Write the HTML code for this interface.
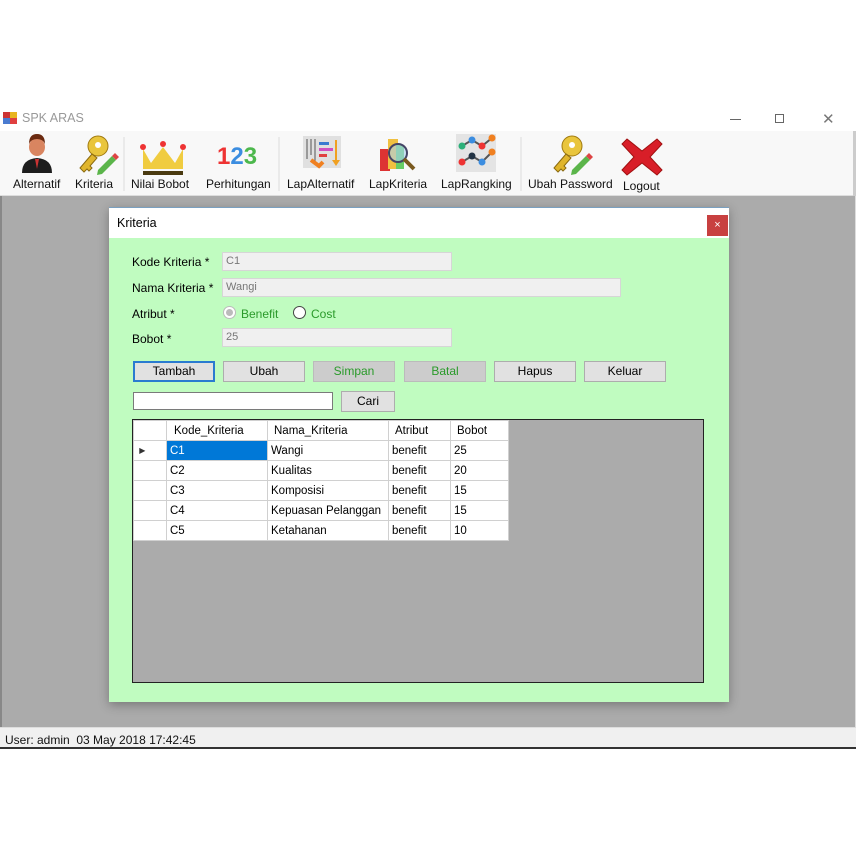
<!DOCTYPE html>
<html><head><style>
*{margin:0;padding:0;box-sizing:border-box}
body{width:856px;height:856px;background:#fff;position:relative;font-family:"Liberation Sans",sans-serif;font-size:12px;color:#000;overflow:hidden}
.a{position:absolute}
.tb{font-size:12px;color:#111;white-space:nowrap}
.lbl{font-size:12px}
.inp{background:#f0f0f0;border:1px solid #d6d6d6;color:#777;font-size:11px;padding:2px 3px;height:19px}
.btn{background:#e1e1e1;border:1px solid #adadad;text-align:center;font-size:12px;line-height:19px;height:21px}
table{border-collapse:collapse;font-size:11.5px}
td{border:1px solid #d0d0d0;height:20px;padding:0 3px;background:#fff}
</style></head><body>
<div class="a" style="left:3px;top:112px;width:14px;height:12px">
<div class="a" style="left:0;top:0;width:7px;height:6px;background:#c33"></div><div class="a" style="left:7px;top:0;width:7px;height:6px;background:#e8b520"></div><div class="a" style="left:0;top:6px;width:7px;height:6px;background:#4a7bd0"></div><div class="a" style="left:7px;top:6px;width:7px;height:6px;background:#e04040"></div></div>
<div class="a" style="left:22px;top:111px;font-size:12.5px;color:#999">SPK ARAS</div>
<div class="a" style="left:730px;top:119px;width:11px;height:1px;background:#666"></div>
<div class="a" style="left:775px;top:114px;width:9px;height:9px;border:1px solid #666"></div>
<div class="a" style="left:822px;top:110px;font-size:15px;color:#777">✕</div>
<div class="a" style="left:0;top:131px;width:856px;height:65px;background:#f8f8f8;border-bottom:1px solid #ddd"></div>
<div class="a" style="left:853px;top:131px;width:3px;height:65px;background:#ccc"></div>
<svg class="a" style="left:0;top:131px" width="856" height="65">
<ellipse cx="37" cy="16" rx="8" ry="9" fill="#d98560"/><path d="M29 13q0-10 8-10q8 0 8 10q-2-5-8-5q-6 0-8 5z" fill="#6b2a10"/><path d="M22 42q0-14 15-15q15 1 15 15z" fill="#1d1d1d"/><path d="M35 28h4l-2 10z" fill="#c33"/>
<g transform="translate(78,3)"><circle cx="20" cy="12" r="10" fill="#e9c53c" stroke="#a07a10"/><circle cx="20" cy="11" r="3" fill="#fff"/><path d="M14 20L2 34l4 4 3-3 2 2 3-3-2-2 7-8z" fill="#e0b52c" stroke="#8a6a10"/><path d="M20 36l14-14 4 4-14 14-5 1z" fill="#5bb54a"/><path d="M34 22l3-3 4 4-3 3z" fill="#d44"/></g>
<line x1="124" y1="6" x2="124" y2="60" stroke="#ddd"/>
<g transform="translate(143,10)"><path d="M0 8l8 14 12-16 12 16 8-14v20h-40z" fill="#f0cc40"/><rect x="0" y="30" width="40" height="4" fill="#4a3a10"/><circle cx="0" cy="6" r="3" fill="#e33"/><circle cx="20" cy="3" r="3" fill="#e33"/><circle cx="40" cy="6" r="3" fill="#e33"/></g>
<text x="217" y="33" font-family="Liberation Sans" font-size="24" font-weight="bold"><tspan fill="#e33">1</tspan><tspan fill="#3b8de0">2</tspan><tspan fill="#4db84d">3</tspan></text>
<line x1="279" y1="6" x2="279" y2="60" stroke="#ddd"/>
<g transform="translate(303,5)"><rect x="0" y="0" width="38" height="32" fill="#e0e0e0"/><path d="M4 3v20M8 3v16M12 3v22" stroke="#555"/><rect x="16" y="6" width="10" height="3" fill="#3a7ad0"/><rect x="16" y="12" width="14" height="3" fill="#d050c0"/><rect x="16" y="18" width="8" height="3" fill="#e04040"/><path d="M32 4v20l-3 0 4 6 4-6h-3v-20z" fill="#f0a020"/><path d="M8 24l8 6 4-4" stroke="#f08020" stroke-width="4" fill="none"/></g>
<g transform="translate(378,4)"><rect x="2" y="14" width="10" height="22" fill="#d33"/><rect x="10" y="4" width="10" height="30" fill="#f0c040"/><rect x="18" y="10" width="8" height="24" fill="#6c6"/><circle cx="20" cy="18" r="9" fill="rgba(170,210,240,.6)" stroke="#446" stroke-width="2"/><path d="M26 24l10 10" stroke="#7a5a20" stroke-width="4"/></g>
<g transform="translate(456,3)"><rect x="0" y="0" width="40" height="38" fill="#e4e4e4"/><path d="M6 12l10-6 10 6 10-8M6 28l10-6 10 6 10-10" stroke="#555" fill="none" stroke-width="2"/><circle cx="6" cy="12" r="3.5" fill="#2db07a"/><circle cx="16" cy="6" r="3.5" fill="#3b8de0"/><circle cx="26" cy="12" r="3.5" fill="#e33"/><circle cx="36" cy="4" r="3.5" fill="#f08020"/><circle cx="6" cy="28" r="3.5" fill="#e33"/><circle cx="16" cy="22" r="3.5" fill="#234"/><circle cx="26" cy="28" r="3.5" fill="#3b8de0"/><circle cx="36" cy="18" r="3.5" fill="#f08020"/></g>
<line x1="521" y1="6" x2="521" y2="60" stroke="#ddd"/>
<g transform="translate(552,3)"><circle cx="20" cy="12" r="10" fill="#e9c53c" stroke="#a07a10"/><circle cx="20" cy="11" r="3" fill="#fff"/><path d="M14 20L2 34l4 4 3-3 2 2 3-3-2-2 7-8z" fill="#e0b52c" stroke="#8a6a10"/><path d="M20 36l14-14 4 4-14 14-5 1z" fill="#5bb54a"/><path d="M34 22l3-3 4 4-3 3z" fill="#d44"/></g>
<path d="M627 8l15 12 15-12 5 5-12 13 12 13-5 5-15-12-15 12-5-5 12-13-12-13z" fill="#d81e28" stroke="#a01010"/>
</svg>
<div class="a tb" style="left:13px;top:177px">Alternatif</div>
<div class="a tb" style="left:75px;top:177px">Kriteria</div>
<div class="a tb" style="left:131px;top:177px">Nilai Bobot</div>
<div class="a tb" style="left:206px;top:177px">Perhitungan</div>
<div class="a tb" style="left:287px;top:177px">LapAlternatif</div>
<div class="a tb" style="left:369px;top:177px">LapKriteria</div>
<div class="a tb" style="left:441px;top:177px">LapRangking</div>
<div class="a tb" style="left:528px;top:177px">Ubah Password</div>
<div class="a tb" style="left:623px;top:179px">Logout</div>
<div class="a" style="left:0;top:196px;width:856px;height:531px;background:#ababab;border-left:2px solid #888;border-right:1px solid #ddd"></div>
<div class="a" style="left:0;top:727px;width:856px;height:20px;background:#f0f0f0;border-top:1px solid #ddd"></div>
<div class="a" style="left:5px;top:733px;font-size:12px;color:#111">User: admin&nbsp; 03 May 2018 17:42:45</div>
<div class="a" style="left:0;top:747px;width:856px;height:2px;background:#333"></div>
<div class="a" style="left:109px;top:207px;width:620px;height:495px;background:#c0fcc0;box-shadow:0 3px 10px rgba(0,0,0,.3)"></div>
<div class="a" style="left:109px;top:207px;width:620px;height:31px;background:#fff;border-top:1px solid #7aa0c0"></div>
<div class="a" style="left:117px;top:216px;font-size:12.5px">Kriteria</div>
<div class="a" style="left:707px;top:215px;width:21px;height:21px;background:#c84040;color:#fff;text-align:center;line-height:20px;font-size:11px">×</div>
<div class="a lbl" style="left:132px;top:255px">Kode Kriteria *</div>
<div class="a lbl" style="left:132px;top:281px">Nama Kriteria *</div>
<div class="a lbl" style="left:132px;top:307px">Atribut *</div>
<div class="a lbl" style="left:132px;top:332px">Bobot *</div>
<div class="a inp" style="left:222px;top:252px;width:230px">C1</div>
<div class="a inp" style="left:222px;top:278px;width:399px">Wangi</div>
<div class="a inp" style="left:222px;top:328px;width:230px">25</div>
<div class="a" style="left:223px;top:306px;width:13px;height:13px;border-radius:50%;background:#fff;border:1px solid #bbb"><div style="margin:2px;width:7px;height:7px;border-radius:50%;background:#bbb"></div></div>
<div class="a" style="left:241px;top:307px;color:#2a9a2a">Benefit</div>
<div class="a" style="left:293px;top:306px;width:13px;height:13px;border-radius:50%;background:#fff;border:1px solid #444"></div>
<div class="a" style="left:311px;top:307px;color:#2a9a2a">Cost</div>
<div class="a btn" style="left:133px;top:361px;width:82px;border:2px solid #2a7bd0;line-height:17px">Tambah</div>
<div class="a btn" style="left:223px;top:361px;width:82px">Ubah</div>
<div class="a btn" style="left:313px;top:361px;width:82px;background:#ccc;border-color:#bbb;color:#2a9a2a">Simpan</div>
<div class="a btn" style="left:404px;top:361px;width:82px;background:#ccc;border-color:#bbb;color:#2a9a2a">Batal</div>
<div class="a btn" style="left:494px;top:361px;width:82px">Hapus</div>
<div class="a btn" style="left:584px;top:361px;width:82px">Keluar</div>
<div class="a" style="left:133px;top:392px;width:200px;height:18px;background:#fff;border:1px solid #7a7a7a"></div>
<div class="a btn" style="left:341px;top:391px;width:54px">Cari</div>
<div class="a" style="left:132px;top:419px;width:572px;height:264px;background:#ababab;border:1px solid #222"></div>
<table class="a" style="left:133px;top:420px">
<tr><td style="width:33px"></td><td style="width:101px;padding-left:7px">Kode_Kriteria</td><td style="width:121px;padding-left:6px">Nama_Kriteria</td><td style="width:62px;padding-left:6px">Atribut</td><td style="width:58px;padding-left:6px">Bobot</td></tr>
<tr><td style="font-size:8px;color:#333">&nbsp;▶</td><td style="background:#0078d7;color:#fff">C1</td><td>Wangi</td><td>benefit</td><td>25</td></tr>
<tr><td></td><td>C2</td><td>Kualitas</td><td>benefit</td><td>20</td></tr>
<tr><td></td><td>C3</td><td>Komposisi</td><td>benefit</td><td>15</td></tr>
<tr><td></td><td>C4</td><td>Kepuasan Pelanggan</td><td>benefit</td><td>15</td></tr>
<tr><td></td><td>C5</td><td>Ketahanan</td><td>benefit</td><td>10</td></tr>
</table>
</body></html>
